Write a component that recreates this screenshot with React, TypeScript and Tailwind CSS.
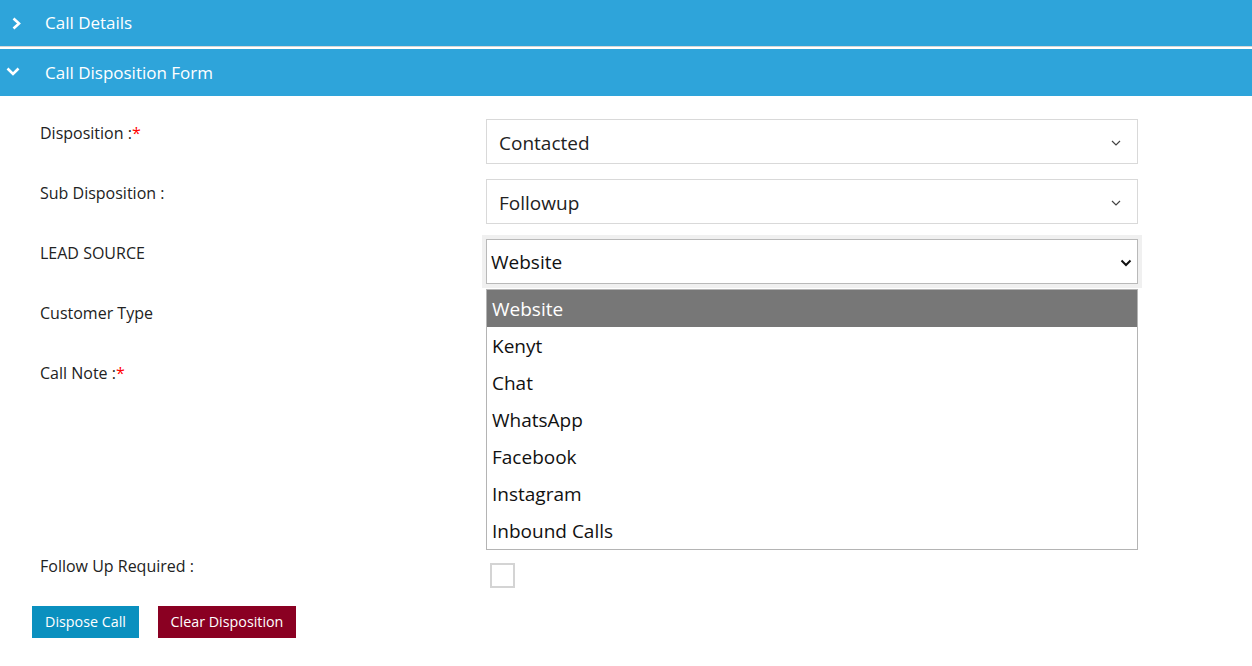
import { useState } from "react";

const font = { fontFamily: '"Open Sans", "Noto Sans", sans-serif' };

const options = ["Website", "Kenyt", "Chat", "WhatsApp", "Facebook", "Instagram", "Inbound Calls"];

const ThinChevron: React.FC = () => (
    <svg width="10" height="6" viewBox="0 0 10 6" className="absolute right-[16px] top-[20px]">
        <path d="M1 1 L5 5 L9 1" fill="none" stroke="#444" strokeWidth="1.2" />
    </svg>
);

const Header: React.FC<{ title: string; open: boolean; height: string }> = ({ title, open, height }) => (
    <div className={`relative flex items-center bg-[#2ea4da] text-white text-[17px] ${height}`}>
        <div className="w-[45px] flex items-center">
            {open ? (
                <svg width="14" height="9" viewBox="0 0 14 9" className="ml-[6px] -mt-[3px]">
                    <path d="M1.5 1.5 L7 7 L12.5 1.5" fill="none" stroke="#fff" strokeWidth="2.6" />
                </svg>
            ) : (
                <svg width="9" height="13" viewBox="0 0 9 13" className="ml-[12px]">
                    <path d="M1.5 1.5 L7 6.5 L1.5 11.5" fill="none" stroke="#fff" strokeWidth="2.6" />
                </svg>
            )}
        </div>
        <span className={open ? "mt-[1px]" : "-mt-[1px]"}>{title}</span>
    </div>
);

const Label: React.FC<{ text: string; required?: boolean }> = ({ text, required }) => (
    <div className="w-[446px] pt-[2px] text-[16px] leading-[24px] text-[#222]">
        {text}
        {required && <span className="text-[#ff0000]">*</span>}
    </div>
);

export default function App() {
    const [follow, setFollow] = useState(false);

    return (
        <div className="w-[1252px] h-[666px] bg-white overflow-hidden" style={font}>
            <Header title="Call Details" open={false} height="h-[46px]" />
            <div className="h-[1px] bg-[#d6d6d6]"></div>
            <div className="h-[2px] bg-white"></div>
            <Header title="Call Disposition Form" open={true} height="h-[47px]" />

            <div className="pl-[40px] pr-[114px] pt-[23px]">
                <div className="flex h-[60px]">
                    <Label text="Disposition :" required />
                    <div className="relative flex-1 h-[45px] border border-[#d9d9d9] flex items-center pl-[12px] pt-[3px] text-[19px] text-[#222]">
                        Contacted
                        <ThinChevron />
                    </div>
                </div>

                <div className="flex h-[60px]">
                    <Label text="Sub Disposition :" />
                    <div className="relative flex-1 h-[45px] border border-[#d9d9d9] flex items-center pl-[12px] pt-[3px] text-[19px] text-[#222]">
                        Followup
                        <ThinChevron />
                    </div>
                </div>

                <div className="flex h-[60px]">
                    <Label text="LEAD SOURCE" />
                    <div className="relative flex-1 h-[45px]">
                        <div className="h-[45px] border border-[#b9b9b9] ring-4 ring-[#f0f0f0] flex items-center pl-[4px] pt-[1px] text-[19px] text-[#111]">
                            Website
                            <svg width="12" height="8" viewBox="0 0 12 8" className="absolute right-[6px] top-[20px]">
                                <path d="M1.5 1.5 L6 6 L10.5 1.5" fill="none" stroke="#111" strokeWidth="2" />
                            </svg>
                        </div>
                        <div className="absolute z-10 left-0 right-0 top-[50px] bg-white border border-[#b4b4b4] text-[19px] text-[#111]">
                            {options.map((o, i) => (
                                <div
                                    key={o}
                                    className={
                                        i === 0
                                            ? "h-[37px] flex items-center pl-[5px] pt-[1px] bg-[#777777] text-white"
                                            : "h-[37px] flex items-center pl-[5px] pt-[1px]"
                                    }
                                >
                                    {o}
                                </div>
                            ))}
                        </div>
                    </div>
                </div>

                <div className="flex h-[60px]">
                    <Label text="Customer Type" />
                    <div className="relative flex-1 h-[45px] border border-[#d9d9d9]">
                        <ThinChevron />
                    </div>
                </div>

                <div className="flex h-[193px]">
                    <Label text="Call Note :" required />
                    <textarea className="flex-1 h-[170px] border border-[#d9d9d9] resize-none"></textarea>
                </div>

                <div className="flex h-[54px]">
                    <Label text="Follow Up Required :" />
                    <div className="flex-1 pl-[4px]">
                        <button
                            onClick={() => setFollow(!follow)}
                            className="w-[25px] h-[25px] border-2 border-[#d4d4d4] bg-white mt-[11px] block"
                        ></button>
                    </div>
                </div>
            </div>

            <div className="flex gap-[19px] pl-[32px]">
                <button className="h-[32px] w-[107px] bg-[#0a90bf] text-white text-[14.3px]">Dispose Call</button>
                <button className="h-[32px] w-[138px] bg-[#8a0022] text-white text-[14.3px]">Clear Disposition</button>
            </div>
        </div>
    );
}
